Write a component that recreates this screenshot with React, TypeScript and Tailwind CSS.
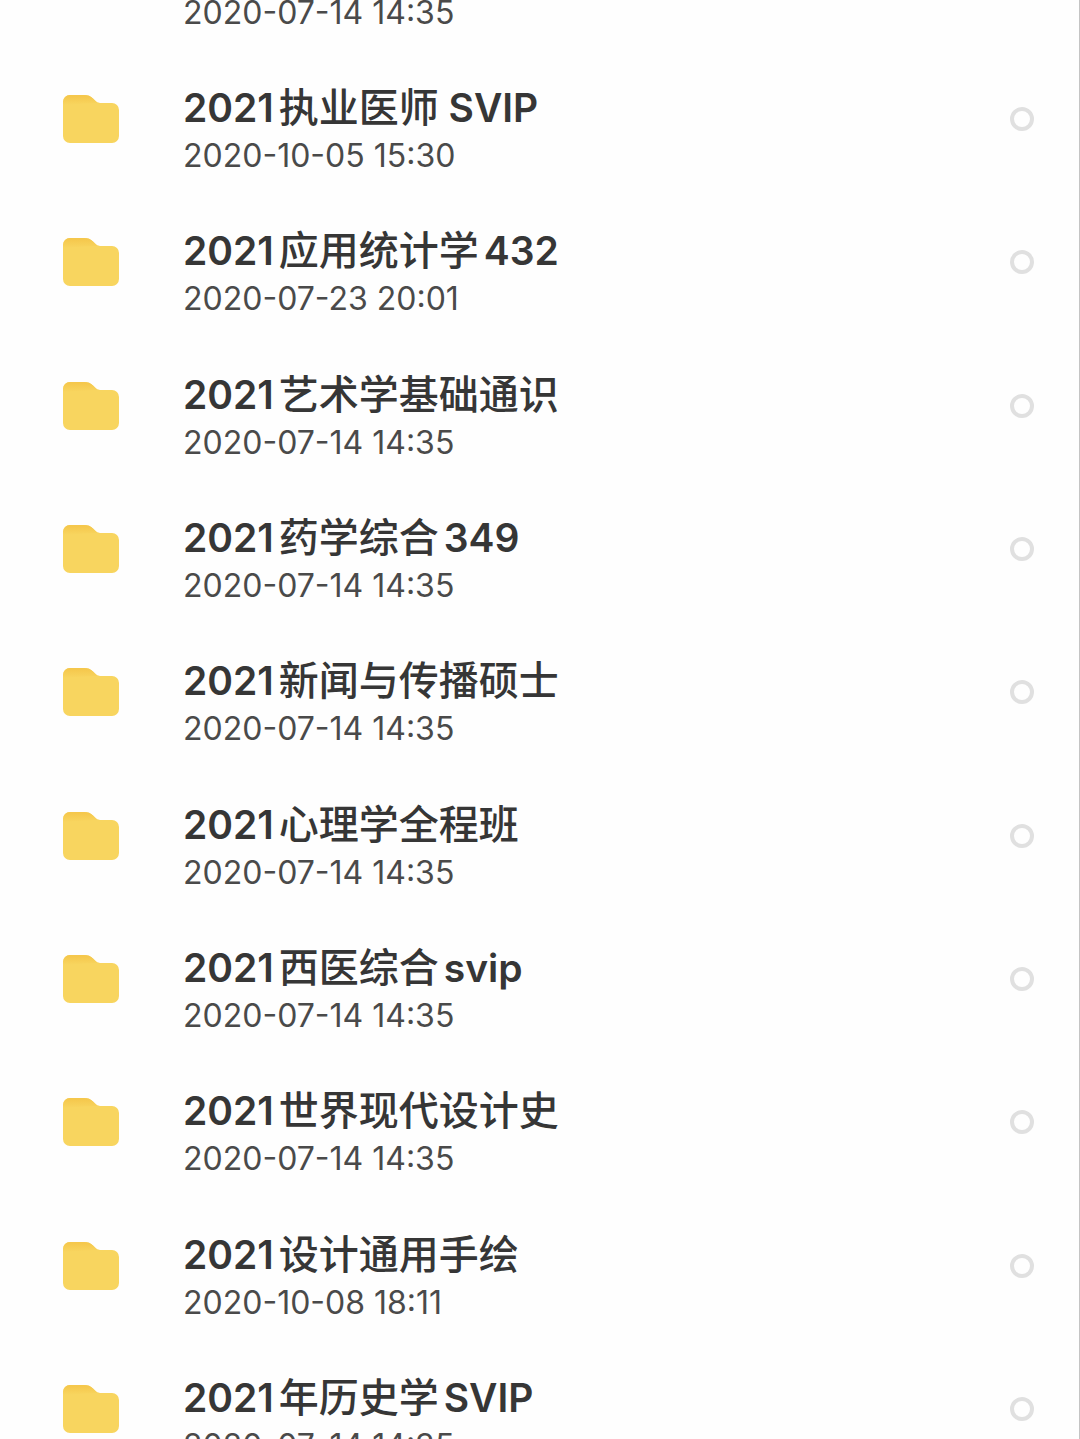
import { useState } from "react";

type Folder = {
  name: string;
  date: string;
};

const folders: Folder[] = [
  { name: "2021中医综合", date: "2020-07-14 14:35" },
  { name: "2021执业医师 SVIP", date: "2020-10-05 15:30" },
  { name: "2021应用统计学432", date: "2020-07-23 20:01" },
  { name: "2021艺术学基础通识", date: "2020-07-14 14:35" },
  { name: "2021药学综合349", date: "2020-07-14 14:35" },
  { name: "2021新闻与传播硕士", date: "2020-07-14 14:35" },
  { name: "2021心理学全程班", date: "2020-07-14 14:35" },
  { name: "2021西医综合svip", date: "2020-07-14 14:35" },
  { name: "2021世界现代设计史", date: "2020-07-14 14:35" },
  { name: "2021设计通用手绘", date: "2020-10-08 18:11" },
  { name: "2021年历史学SVIP", date: "2020-07-14 14:35" },
];

function FolderIcon({ id }: { id: string }) {
  return (
    <svg viewBox="0 0 58 50" className="h-[50px] w-[58px] shrink-0" aria-hidden="true">
      <defs>
        <linearGradient id={id} x1="0" y1="0" x2="0" y2="1">
          <stop offset="0.1" stopColor="#f5c74c" />
          <stop offset="0.9" stopColor="#f8d55f" />
        </linearGradient>
      </defs>
      <path
        d="M1 42V8a7 7 0 0 1 7-7h14c4 0 6.500 1 9 3.500l2 2c1.500 1.700 3 2.500 5 2.500h12a7 7 0 0 1 7 7v26a7 7 0 0 1-7 7H8a7 7 0 0 1-7-7z"
        fill="#f8d55f"
      />
      <path
        d="M1 12V8a7 7 0 0 1 7-7h14c4 0 6.500 1 9 3.500l2 2c1.500 1.700 3 2.500 5 2.500C26 9 12 10 1 12z"
        fill={`url(#${id})`}
      />
    </svg>
  );
}

// Han characters look heavier than latin ones, so they get a lighter weight
function FolderName({ name }: { name: string }) {
  const parts = name.split(/([\u4e00-\u9fff]+)/);

  return (
    <span className="block truncate text-[39px] leading-[52px] font-semibold text-[#363636] [text-autospace:normal]">
      {parts.map((part, i) =>
        i % 2 === 1 ? (
          <span key={i} className="text-[40px] font-medium">
            {part}
          </span>
        ) : (
          part
        )
      )}
    </span>
  );
}

function FolderRow({ folder, id }: { folder: Folder; id: string }) {
  const [checked, setChecked] = useState(false);

  return (
    <li className="flex h-[143px] items-center pr-[45px] pl-[62px] nth-[3n]:h-36">
      <FolderIcon id={`${id}-tab`} />
      <label htmlFor={id} className="ml-[63px] min-w-0 flex-1 pt-[22px]">
        <FolderName name={folder.name} />
        <span className="block text-[32px] leading-[44px] text-[#4a4a4a]">{folder.date}</span>
      </label>
      <input
        id={id}
        type="checkbox"
        checked={checked}
        onChange={(e) => setChecked(e.target.checked)}
        className="size-6 shrink-0 appearance-none rounded-full border-4 border-[#e0e0e0] checked:border-[#f8d55f]"
      />
    </li>
  );
}

export default function App() {
  return (
    <main className="h-screen overflow-hidden border-r border-[#c4c4c4] bg-[#fefefe] font-['Inter','Noto_Sans_CJK_SC',sans-serif]">
      {/* list is scrolled part-way through its first row */}
      <ul className="-mt-24">
        {folders.map((folder, i) => (
          <FolderRow key={folder.name} folder={folder} id={`folder-${i}`} />
        ))}
      </ul>
    </main>
  );
}
